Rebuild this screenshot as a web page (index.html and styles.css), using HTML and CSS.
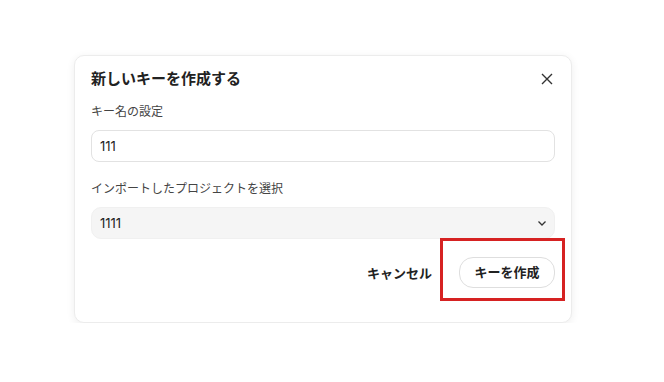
FILE: index.html
```html
<!DOCTYPE html>
<html>
<head>
<meta charset="utf-8"/>
<title>新しいキーを作成する</title>
<link rel="stylesheet" href="styles.css">
</head>
<body>

<div class="dialog">
  <div class="dialog-head">
    <h1>新しいキーを作成する</h1>
    <span class="close">
      <svg width="14" height="14" viewBox="0 0 14 14"><path d="M2 2 L12 12 M12 2 L2 12" stroke="#333" stroke-width="1.4" fill="none"/></svg>
    </span>
  </div>

  <div class="field first">
    <label>キー名の設定</label>
    <div class="input">111</div>
  </div>

  <div class="field">
    <label>インポートしたプロジェクトを選択</label>
    <div class="select">
      <span>1111</span>
      <svg width="12" height="12" viewBox="0 0 12 12"><path d="M2.5 4.5 L6 8 L9.5 4.5" stroke="#333" stroke-width="1.3" fill="none"/></svg>
    </div>
  </div>

  <div class="dialog-foot">
    <span class="cancel">キャンセル</span>
    <span class="create-wrap">
      <span class="create">キーを作成</span>
      <span class="mark"></span>
    </span>
  </div>
</div>

</body>
</html>
```

FILE: styles.css
```css
body {
   margin: 0;
   background-color: white;
   font-family: Inter, "Noto Sans CJK JP", sans-serif;
   color: #222;
}

.dialog {
   box-sizing: border-box;
   width: 498px;
   height: 268px;
   margin: 55px 0 0 74px;
   padding: 12px 16px 0 16px;
   background: white;
   border: 1px solid #ececec;
   border-radius: 10px;
   box-shadow: 0 2px 8px rgba(0, 0, 0, 0.07);
}

.dialog-head {
   display: flex;
   justify-content: space-between;
   align-items: center;
   height: 22px;
}

h1 {
   margin: 0;
   font-size: 15px;
   font-weight: bold;
   line-height: 22px;
}

.close {
   display: flex;
   margin-right: 1px;
}

.field label {
   display: block;
   font-size: 12px;
   line-height: 18px;
   color: #444;
}

.field.first {
   margin-top: 13px;
}

.field + .field {
   margin-top: 18px;
}

.input, .select {
   box-sizing: border-box;
   height: 32px;
   margin-top: 9px;
   padding: 0 8px;
   font-size: 13px;
   line-height: 30px;
   border-radius: 8px;
}

.input {
   border: 1px solid #e2e2e2;
}

.select {
   display: flex;
   justify-content: space-between;
   align-items: center;
   background: #f5f5f5;
   border: 1px solid #f0f0f0;
   border-radius: 10px;
   padding-right: 6px;
}

.dialog-foot {
   display: flex;
   justify-content: flex-end;
   align-items: center;
   gap: 27px;
   margin-top: 18px;
}

.cancel {
   font-size: 13px;
   font-weight: bold;
}

.create-wrap {
   position: relative;
   display: flex;
}

.create {
   box-sizing: border-box;
   width: 96px;
   height: 31px;
   line-height: 29px;
   text-align: center;
   font-size: 13px;
   font-weight: bold;
   border: 1px solid #dedede;
   border-radius: 14px;
   background: white;
}

.mark {
   position: absolute;
   left: -19px;
   top: -19px;
   right: -10px;
   bottom: -13px;
   border: 3px solid #d62222;
}
```
